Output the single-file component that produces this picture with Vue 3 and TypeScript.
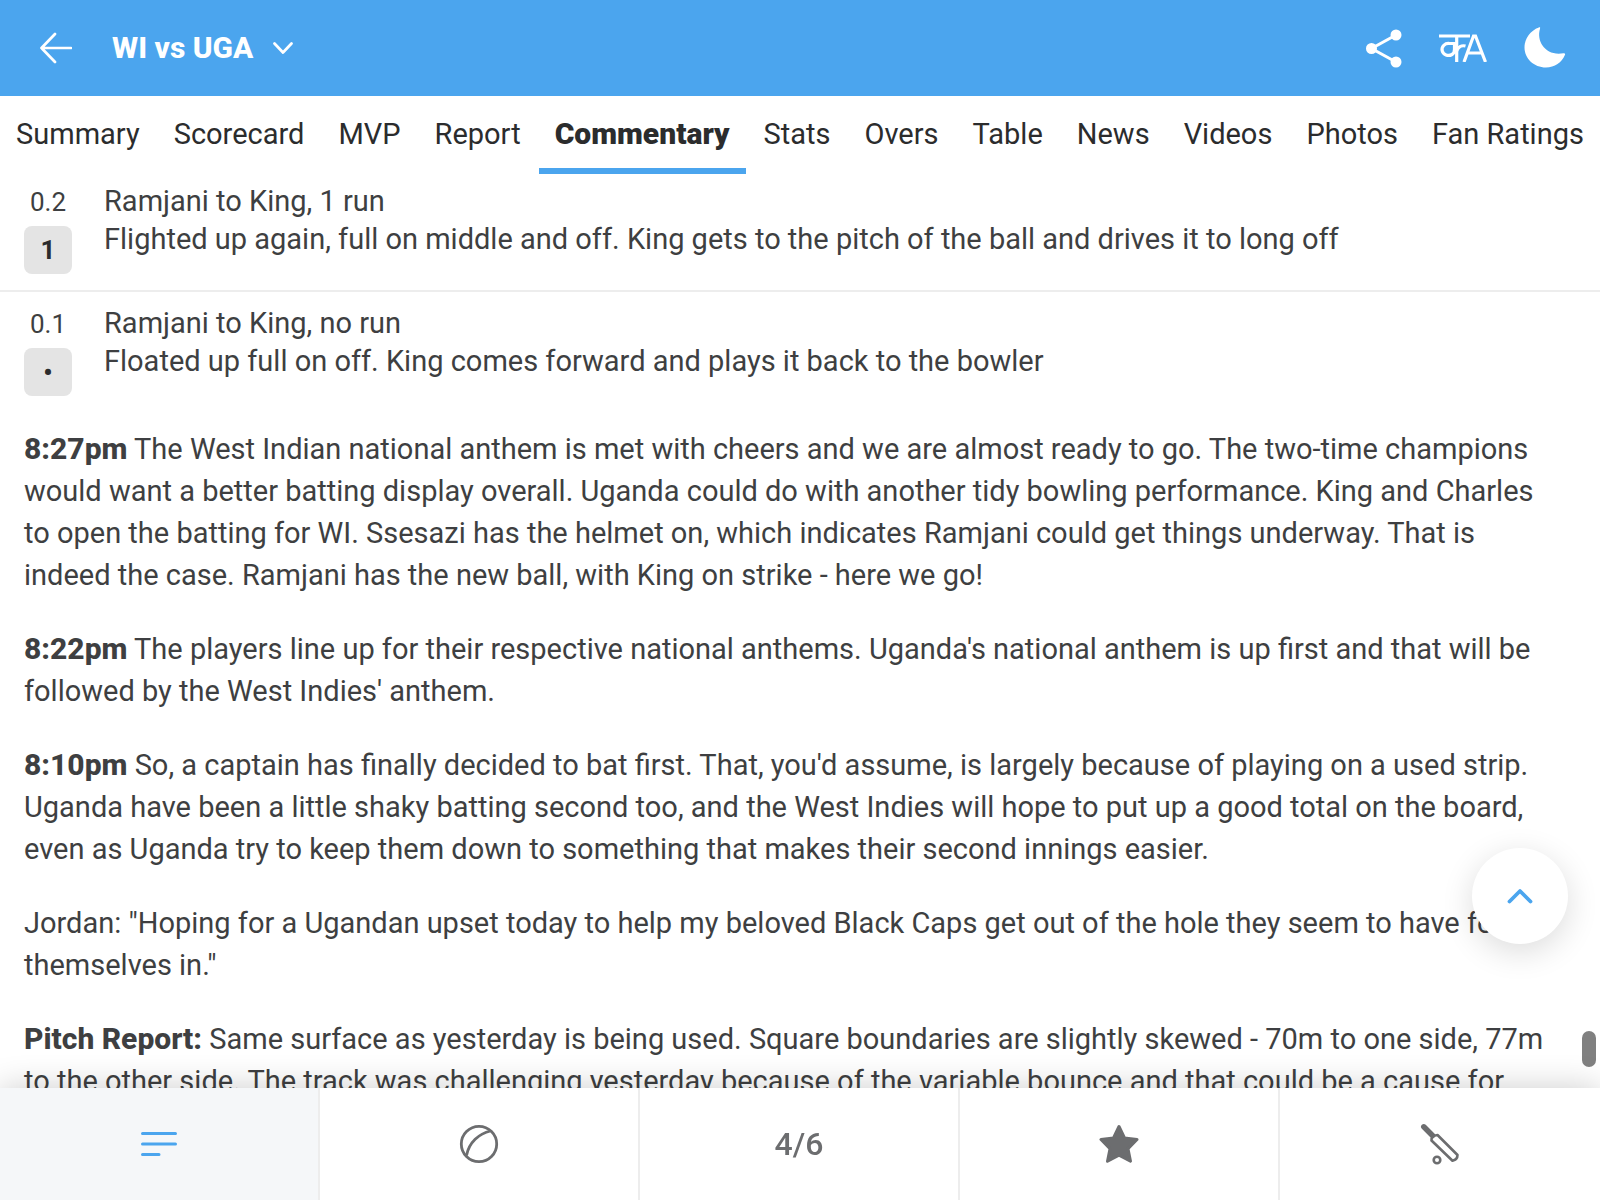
<script setup lang="ts">
import { ref } from 'vue'

interface Ball {
  over: string
  badge: string
  title: string
  text: string
}

interface Note {
  lead?: string
  text: string
}

const tabs: string[] = [
  'Summary', 'Scorecard', 'MVP', 'Report', 'Commentary', 'Stats',
  'Overs', 'Table', 'News', 'Videos', 'Photos', 'Fan Ratings',
]
const activeTab = ref('Commentary')

const balls: Ball[] = [
  {
    over: '0.2',
    badge: '1',
    title: 'Ramjani to King, 1 run',
    text: 'Flighted up again, full on middle and off. King gets to the pitch of the ball and drives it to long off',
  },
  {
    over: '0.1',
    badge: '•',
    title: 'Ramjani to King, no run',
    text: 'Floated up full on off. King comes forward and plays it back to the bowler',
  },
]

const notes: Note[] = [
  {
    lead: '8:27pm',
    text: 'The West Indian national anthem is met with cheers and we are almost ready to go. The two-time champions would want a better batting display overall. Uganda could do with another tidy bowling performance. King and Charles to open the batting for WI. Ssesazi has the helmet on, which indicates Ramjani could get things underway. That is indeed the case. Ramjani has the new ball, with King on strike - here we go!',
  },
  {
    lead: '8:22pm',
    text: "The players line up for their respective national anthems. Uganda's national anthem is up first and that will be followed by the West Indies' anthem.",
  },
  {
    lead: '8:10pm',
    text: "So, a captain has finally decided to bat first. That, you'd assume, is largely because of playing on a used strip. Uganda have been a little shaky batting second too, and the West Indies will hope to put up a good total on the board, even as Uganda try to keep them down to something that makes their second innings easier.",
  },
  {
    text: 'Jordan: "Hoping for a Ugandan upset today to help my beloved Black Caps get out of the hole they seem to have found themselves in."',
  },
  {
    lead: 'Pitch Report:',
    text: 'Same surface as yesterday is being used. Square boundaries are slightly skewed - 70m to one side, 77m to the other side. The track was challenging yesterday because of the variable bounce and that could be a cause for',
  },
]
</script>

<template>
  <div class="app">
    <header class="bar">
      <button class="icon-btn" type="button" aria-label="Back">
        <svg width="32" height="32" viewBox="0 0 32 32" fill="none" stroke="#fff" stroke-width="2.7" stroke-linecap="round" stroke-linejoin="round">
          <path d="M31 16H1.5M15 2L1.5 16L15 30" />
        </svg>
      </button>
      <button class="match" type="button">
        WI vs UGA
        <svg width="20" height="12" viewBox="0 0 20 12" fill="none" stroke="#fff" stroke-width="2.7" stroke-linecap="round" stroke-linejoin="round">
          <path d="M1.5 1.5L10 10.5L18.5 1.5" />
        </svg>
      </button>
      <div class="actions">
        <button class="icon-btn" type="button" aria-label="Share">
          <svg width="36" height="40" viewBox="0 0 36 40">
            <path d="M30 7L5.500 20.500L30 34" fill="none" stroke="#fff" stroke-width="3" />
            <g fill="#fff"><circle cx="30" cy="7" r="5.500" /><circle cx="5.500" cy="20.500" r="5.500" /><circle cx="30" cy="34" r="5.500" /></g>
          </svg>
        </button>
        <button class="icon-btn" type="button" aria-label="Change language">
          <svg width="48" height="28" viewBox="0 0 48 28" fill="none" stroke="#fff" stroke-width="3.200">
            <path d="M0 2H31M17.700 2V28M17.700 9.500H10.500A6.500 6 0 1 0 13 20.500Q15.500 19 15.500 15.500V9.500M17.700 17.500C19 13 22.500 11 26.500 12" />
            <path d="M25 28L34.500 2H36.500L46.500 28M28.500 19H42.500" />
          </svg>
        </button>
        <button class="icon-btn" type="button" aria-label="Dark mode">
          <svg width="42" height="42" viewBox="0 0 42 42">
            <path d="M14.800 0.500C16 .1 16.400 .7 16 1.700C12 14.500 22 29.500 39.500 26.200C40.900 25.900 41.400 26.700 41 27.800C38 35.500 30.500 40.500 22 40.500C10 40.500 .5 31.500 .5 20.500C.5 11.500 6.500 3.500 14.800 .5Z" fill="#fff" />
          </svg>
        </button>
      </div>
    </header>

    <nav class="tabs">
      <a v-for="tab in tabs" :key="tab" href="#" :class="{ active: tab === activeTab }" @click.prevent="activeTab = tab">{{ tab }}</a>
    </nav>

    <main class="feed">
      <article v-for="ball in balls" :key="ball.over" class="ball">
        <div class="count">
          <span class="over">{{ ball.over }}</span>
          <span class="badge">{{ ball.badge }}</span>
        </div>
        <div class="detail">
          <div>{{ ball.title }}</div>
          <div>{{ ball.text }}</div>
        </div>
      </article>
      <section class="notes">
        <p v-for="(note, i) in notes" :key="i"><b v-if="note.lead">{{ note.lead }}</b> {{ note.text }}</p>
      </section>
    </main>

    <button class="to-top" type="button" aria-label="Back to top">
      <svg width="26" height="16" viewBox="0 0 26 16" fill="none" stroke="#4ba5ee" stroke-width="3.800" stroke-linecap="round" stroke-linejoin="round">
        <path d="M2.500 13.500L13 3L23.500 13.500" />
      </svg>
    </button>
    <div class="thumb"></div>

    <nav class="bottom">
      <button class="current" type="button" aria-label="Commentary">
        <svg width="40" height="40" viewBox="0 0 40 40" stroke="#4ba5ee" stroke-width="3" stroke-linecap="round">
          <path d="M3.500 9.500H36.500M3.500 20H36.500M3.500 30.500H20" />
        </svg>
      </button>
      <button type="button" aria-label="Ball by ball">
        <svg width="40" height="40" viewBox="0 0 40 40" fill="none" stroke="#6c6d6f" stroke-width="2.800">
          <circle cx="20" cy="20" r="17.700" /><path d="M31.500 7C20 9.500 10 18.500 7.500 31.500" />
        </svg>
      </button>
      <button type="button">4/6</button>
      <button type="button" aria-label="Highlights">
        <svg width="40" height="40" viewBox="0 0 40 40">
          <path d="M20 2.500L25.500 14L38 15.500L29 24.800L31.500 37.200L20 31.200L8.500 37.200L11 24.800L2 15.500L14.500 14Z" fill="#6c6d6f" stroke="#6c6d6f" stroke-width="3" stroke-linejoin="round" />
        </svg>
      </button>
      <button type="button" aria-label="Wickets">
        <svg width="40" height="42" viewBox="0 0 40 42" fill="none" stroke="#6c6d6f">
          <path d="M3.800 3.800L12.500 12.500" stroke-width="5.500" stroke-linecap="round" />
          <path d="M11.500 17.500Q11 12.500 17.500 12L37.500 32Q37.500 36.500 32.500 37.800Z" stroke-width="2.600" stroke-linejoin="round" />
          <circle cx="17" cy="37" r="3.300" stroke-width="2.600" />
        </svg>
      </button>
    </nav>
  </div>
</template>

<style>
body {
  margin: 0;
}
</style>

<style scoped>
.app {
  display: flex;
  flex-direction: column;
  height: 100vh;
  background: #fff;
  color: #3e3f41;
  font-family: Roboto, "Liberation Sans", sans-serif;
  overflow: hidden;
}

button {
  margin: 0;
  padding: 0;
  border: 0;
  background: none;
  color: inherit;
  font: inherit;
  cursor: pointer;
}

svg {
  display: block;
}

.bar {
  flex: none;
  display: flex;
  align-items: center;
  height: 96px;
  padding: 0 34px 0 40px;
  background: #4ba5ee;
  color: #fff;
}

.match {
  display: flex;
  align-items: center;
  gap: 20px;
  margin-left: 40px;
  font-size: 30px;
  font-weight: 800;
  line-height: 40px;
}

.actions {
  display: flex;
  align-items: center;
  gap: 37px;
  margin-left: auto;
}

.tabs {
  flex: none;
  display: flex;
  justify-content: space-between;
  height: 78px;
}

.tabs a {
  box-sizing: border-box;
  height: 78px;
  padding: 0 16px;
  border-bottom: 6px solid transparent;
  color: #2b2c2d;
  font-size: 29px;
  line-height: 76px;
  text-decoration: none;
  white-space: nowrap;
}

.tabs a.active {
  border-color: #4ba5ee;
  font-size: 30px;
  font-weight: 900;
}

.feed {
  flex: 1;
  min-height: 0;
  overflow: hidden;
  font-size: 29px;
}

.ball {
  display: flex;
  gap: 32px;
  padding: 12px 24px 16px;
}

.ball:first-child {
  padding-top: 8px;
}

.ball + .ball {
  border-top: 2px solid #ededed;
}

.count {
  flex: none;
  display: flex;
  flex-direction: column;
  gap: 4px;
  width: 48px;
  text-align: center;
}

.over {
  font-size: 26px;
  line-height: 40px;
}

.badge {
  border-radius: 8px;
  background: #e4e4e4;
  color: #2b2c2d;
  font-size: 26px;
  font-weight: 700;
  line-height: 48px;
}

.detail {
  line-height: 38px;
}

.notes {
  padding: 16px 40px 0 24px;
  line-height: 42px;
}

.notes p {
  margin: 0 0 32px;
}

.notes b {
  font-size: 30px;
  font-weight: 800;
}

.to-top {
  position: fixed;
  right: 32px;
  bottom: 256px;
  display: flex;
  align-items: center;
  justify-content: center;
  width: 96px;
  height: 96px;
  border-radius: 50%;
  background: #fff;
  box-shadow: 0 8px 32px rgba(0, 0, 0, 0.14);
}

.thumb {
  position: fixed;
  right: 4px;
  bottom: 133px;
  width: 14px;
  height: 36px;
  border-radius: 7px;
  background: #808080;
}

.bottom {
  position: relative;
  flex: none;
  display: grid;
  grid-template-columns: repeat(5, 1fr);
  height: 112px;
  background: #fff;
  box-shadow: 0 0 32px rgba(0, 0, 0, 0.2);
}

.bottom button {
  display: flex;
  align-items: center;
  justify-content: center;
  border-right: 2px solid #ededed;
  color: #6c6d6f;
  font-size: 32px;
  font-weight: 500;
}

.bottom button:last-child {
  border-right: 0;
}

.bottom .current {
  background: #f5f7f9;
}
</style>
